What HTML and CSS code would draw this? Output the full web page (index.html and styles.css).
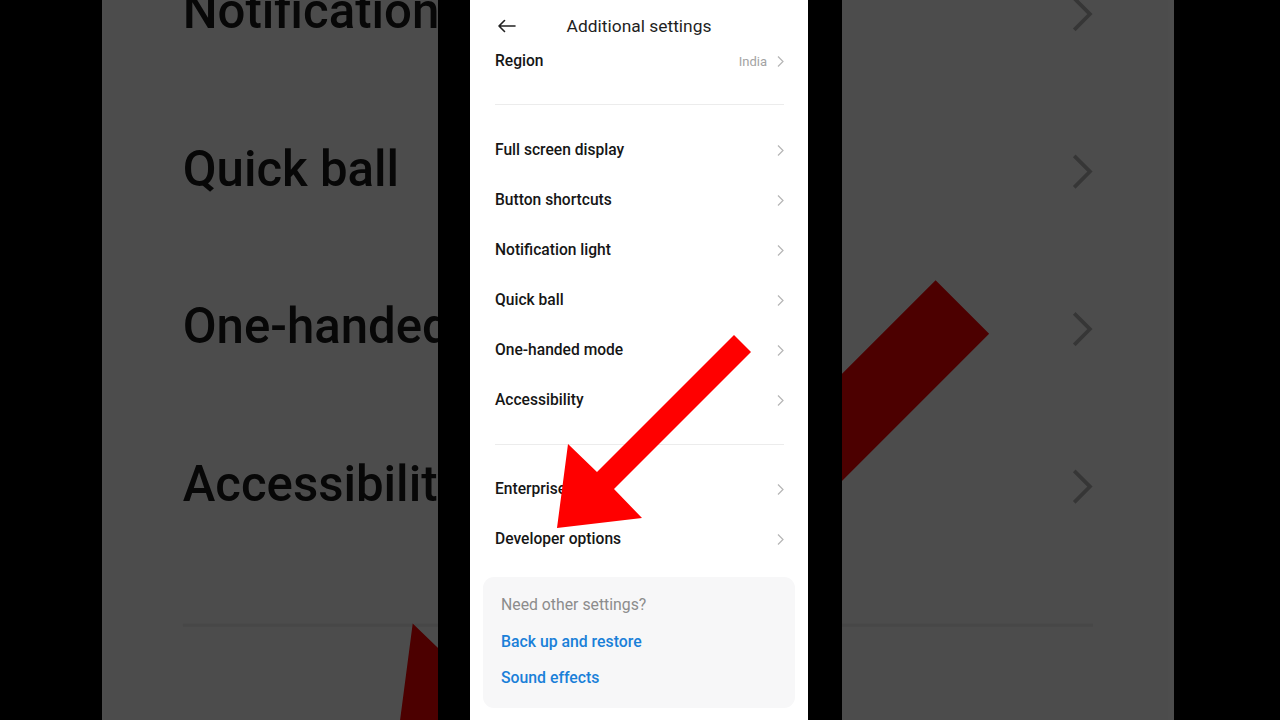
FILE: index.html
```html
<!DOCTYPE html>
<html lang="en">
<head>
<meta charset="utf-8">
<title>Additional settings</title>
<link rel="stylesheet" href="styles.css">
</head>
<body>
<div class="stage">
  <div class="backdrop" aria-hidden="true">
    <div class="phone phone--zoom">
      <header class="bar">
        <svg class="back" width="19" height="14" viewBox="0 0 19 14"><path d="M18 7H2M7.5 1.5L2 7l5.5 5.5" fill="none" stroke="#222" stroke-width="1.6" stroke-linecap="round" stroke-linejoin="round"/></svg>
        <h1 class="title">Additional settings</h1>
        <span></span>
      </header>
      <div class="row row--region"><span class="label">Region</span><span class="value">India</span><svg class="chev" width="7" height="13" viewBox="0 0 7 13"><path d="M1 1.5l5 5-5 5" fill="none" stroke="#b5b5b5" stroke-width="1.2"/></svg></div>
      <div class="sep sep--first"></div>
      <ul class="group">
        <li class="row"><span class="label">Full screen display</span><svg class="chev" width="7" height="13" viewBox="0 0 7 13"><path d="M1 1.5l5 5-5 5" fill="none" stroke="#b5b5b5" stroke-width="1.2"/></svg></li>
        <li class="row"><span class="label">Button shortcuts</span><svg class="chev" width="7" height="13" viewBox="0 0 7 13"><path d="M1 1.5l5 5-5 5" fill="none" stroke="#b5b5b5" stroke-width="1.2"/></svg></li>
        <li class="row"><span class="label">Notification light</span><svg class="chev" width="7" height="13" viewBox="0 0 7 13"><path d="M1 1.5l5 5-5 5" fill="none" stroke="#b5b5b5" stroke-width="1.2"/></svg></li>
        <li class="row"><span class="label">Quick ball</span><svg class="chev" width="7" height="13" viewBox="0 0 7 13"><path d="M1 1.5l5 5-5 5" fill="none" stroke="#b5b5b5" stroke-width="1.2"/></svg></li>
        <li class="row"><span class="label">One-handed mode</span><svg class="chev" width="7" height="13" viewBox="0 0 7 13"><path d="M1 1.5l5 5-5 5" fill="none" stroke="#b5b5b5" stroke-width="1.2"/></svg></li>
        <li class="row"><span class="label">Accessibility</span><svg class="chev" width="7" height="13" viewBox="0 0 7 13"><path d="M1 1.5l5 5-5 5" fill="none" stroke="#b5b5b5" stroke-width="1.2"/></svg></li>
      </ul>
      <div class="sep sep--second"></div>
      <ul class="group">
        <li class="row"><span class="label">Enterprise mode</span><svg class="chev" width="7" height="13" viewBox="0 0 7 13"><path d="M1 1.5l5 5-5 5" fill="none" stroke="#b5b5b5" stroke-width="1.2"/></svg></li>
        <li class="row"><span class="label">Developer options</span><svg class="chev" width="7" height="13" viewBox="0 0 7 13"><path d="M1 1.5l5 5-5 5" fill="none" stroke="#b5b5b5" stroke-width="1.2"/></svg></li>
      </ul>
      <section class="card">
        <p class="card-title">Need other settings?</p>
        <a class="card-link">Back up and restore</a>
        <a class="card-link">Sound effects</a>
      </section>
      <svg class="arrow" width="338" height="720" viewBox="0 0 338 720"><polygon points="264,335 281,352 144,489 172,518 87,528 98,444 127,472" fill="#ff0000"/></svg>
    </div>
  </div>

  <div class="center">
    <div class="phone">
      <header class="bar">
        <svg class="back" width="19" height="14" viewBox="0 0 19 14"><path d="M18 7H2M7.5 1.5L2 7l5.5 5.5" fill="none" stroke="#222" stroke-width="1.6" stroke-linecap="round" stroke-linejoin="round"/></svg>
        <h1 class="title">Additional settings</h1>
        <span></span>
      </header>
      <div class="row row--region"><span class="label">Region</span><span class="value">India</span><svg class="chev" width="7" height="13" viewBox="0 0 7 13"><path d="M1 1.5l5 5-5 5" fill="none" stroke="#b5b5b5" stroke-width="1.2"/></svg></div>
      <div class="sep sep--first"></div>
      <ul class="group">
        <li class="row"><span class="label">Full screen display</span><svg class="chev" width="7" height="13" viewBox="0 0 7 13"><path d="M1 1.5l5 5-5 5" fill="none" stroke="#b5b5b5" stroke-width="1.2"/></svg></li>
        <li class="row"><span class="label">Button shortcuts</span><svg class="chev" width="7" height="13" viewBox="0 0 7 13"><path d="M1 1.5l5 5-5 5" fill="none" stroke="#b5b5b5" stroke-width="1.2"/></svg></li>
        <li class="row"><span class="label">Notification light</span><svg class="chev" width="7" height="13" viewBox="0 0 7 13"><path d="M1 1.5l5 5-5 5" fill="none" stroke="#b5b5b5" stroke-width="1.2"/></svg></li>
        <li class="row"><span class="label">Quick ball</span><svg class="chev" width="7" height="13" viewBox="0 0 7 13"><path d="M1 1.5l5 5-5 5" fill="none" stroke="#b5b5b5" stroke-width="1.2"/></svg></li>
        <li class="row"><span class="label">One-handed mode</span><svg class="chev" width="7" height="13" viewBox="0 0 7 13"><path d="M1 1.5l5 5-5 5" fill="none" stroke="#b5b5b5" stroke-width="1.2"/></svg></li>
        <li class="row"><span class="label">Accessibility</span><svg class="chev" width="7" height="13" viewBox="0 0 7 13"><path d="M1 1.5l5 5-5 5" fill="none" stroke="#b5b5b5" stroke-width="1.2"/></svg></li>
      </ul>
      <div class="sep sep--second"></div>
      <ul class="group">
        <li class="row"><span class="label">Enterprise mode</span><svg class="chev" width="7" height="13" viewBox="0 0 7 13"><path d="M1 1.5l5 5-5 5" fill="none" stroke="#b5b5b5" stroke-width="1.2"/></svg></li>
        <li class="row"><span class="label">Developer options</span><svg class="chev" width="7" height="13" viewBox="0 0 7 13"><path d="M1 1.5l5 5-5 5" fill="none" stroke="#b5b5b5" stroke-width="1.2"/></svg></li>
      </ul>
      <section class="card">
        <p class="card-title">Need other settings?</p>
        <a class="card-link">Back up and restore</a>
        <a class="card-link">Sound effects</a>
      </section>
      <svg class="arrow" width="338" height="720" viewBox="0 0 338 720"><polygon points="264,335 281,352 144,489 172,518 87,528 98,444 127,472" fill="#ff0000"/></svg>
    </div>
  </div>
</div>
</body>
</html>
```

FILE: styles.css
```css
* { box-sizing: border-box; }
html, body {
  margin: 0;
  padding: 0;
  background: #000;
  width: 1280px;
  height: 720px;
  overflow: hidden;
  font-family: Roboto, "Noto Sans", Arial, sans-serif;
}
.stage {
  display: grid;
  width: 1280px;
  height: 720px;
}
.backdrop, .center {
  grid-area: 1 / 1;
  height: 720px;
  overflow: hidden;
}
.backdrop {
  margin-left: 102px;
  width: 1072px;
  background: #4d4d4d;
}
.phone--zoom {
  transform-origin: 0 0;
  transform: translate(2px, -775px) scale(3.15);
  filter: brightness(0.3);
}
.center {
  position: relative;
  z-index: 1;
  margin-left: 438px;
  width: 404px;
  background: #000;
  padding-left: 32px;
}

.phone {
  position: relative;
  width: 338px;
  height: 720px;
  background: #fff;
  overflow: hidden;
}
.bar {
  height: 52px;
  display: grid;
  grid-template-columns: 1fr auto 1fr;
  align-items: center;
}
.back { margin-left: 27px; }
.title {
  margin: 0;
  font-size: 17.4px;
  font-weight: 400;
  color: #1f1f1f;
}
.group {
  list-style: none;
  margin: 0;
  padding: 0;
}
.row {
  display: flex;
  align-items: center;
  height: 50px;
  padding: 0 24px 0 25px;
}
.row--region {
  height: 18px;
}
.label {
  flex: 1;
  font-size: 15.6px;
  font-weight: 500;
  color: #161616;
}
.value {
  font-size: 13px;
  color: #a3a3a3;
  margin-right: 10px;
}
.chev { display: block; }
.sep {
  height: 1px;
  background: #ececec;
  margin: 0 24px 0 25px;
}
.sep--first { margin-top: 34px; margin-bottom: 20px; }
.sep--second { margin-top: 19px; margin-bottom: 19px; }
.card {
  margin: 13px 13px 0;
  height: 131px;
  background: #f7f7f8;
  border-radius: 11px;
  padding: 19px 18px 0;
  display: flex;
  flex-direction: column;
}
.card-title {
  margin: 0;
  font-size: 15.8px;
  line-height: 18px;
  color: #8c8c8c;
}
.card-link {
  font-size: 15.8px;
  font-weight: 500;
  line-height: 18px;
  color: #1a80d8;
  margin-top: 19px;
}
.card-link + .card-link { margin-top: 18px; }
.arrow {
  position: absolute;
  left: 0;
  top: 0;
  pointer-events: none;
}
```
